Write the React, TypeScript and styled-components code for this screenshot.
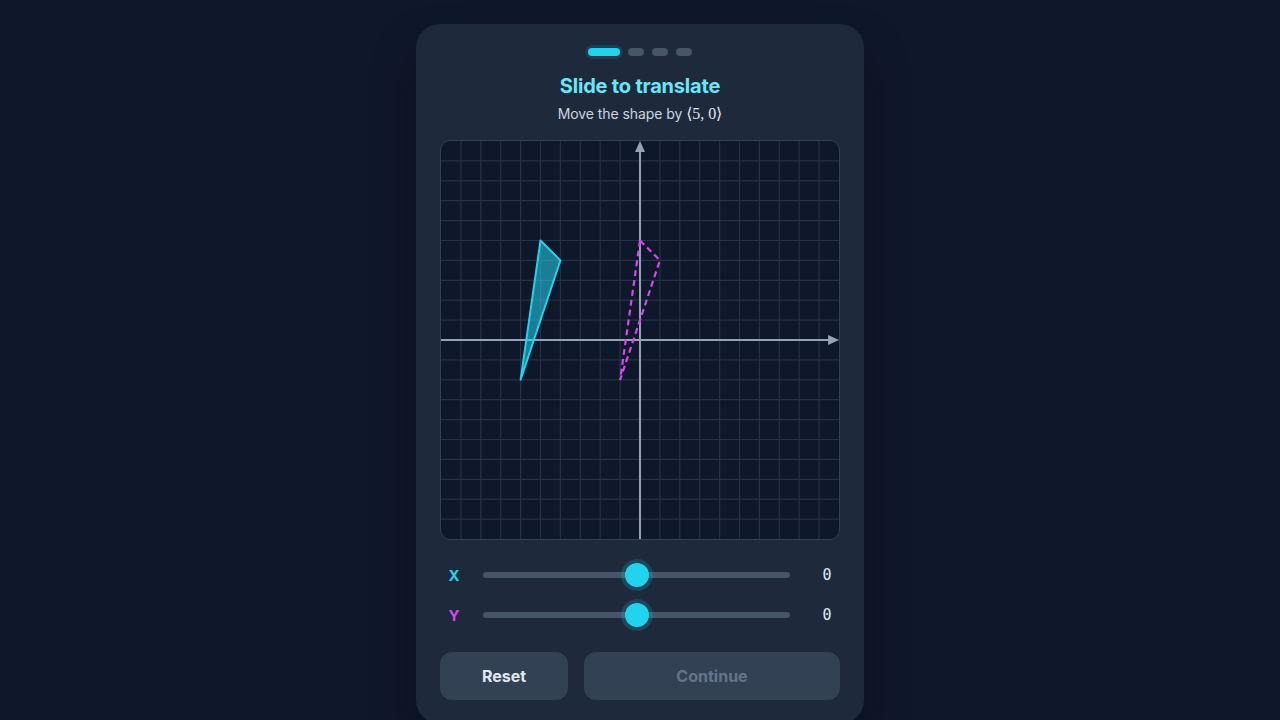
import React, { useState } from "react";
import styled, { createGlobalStyle } from "styled-components";

const GlobalStyle = createGlobalStyle`
  html, body {
    margin: 0;
    padding: 0;
    background: #0f172a;
    font-family: Inter, "Noto Sans", "DejaVu Sans", sans-serif;
    overflow: hidden;
  }
`;

const Page = styled.div`
  display: flex;
  justify-content: center;
  padding-top: 24px;
  min-height: 720px;
  box-sizing: border-box;
`;

const Card = styled.div`
  width: 448px;
  box-sizing: border-box;
  padding: 24px;
  background: #1e293b;
  border-radius: 24px;
  box-shadow: 0 25px 50px -12px rgba(0, 0, 0, 0.55);
  display: flex;
  flex-direction: column;
`;

const Steps = styled.div`
  display: flex;
  justify-content: center;
  gap: 8px;
`;

const Step = styled.div<{ $active?: boolean }>`
  width: ${({ $active }) => ($active ? "32px" : "16px")};
  height: 8px;
  border-radius: 4px;
  background: ${({ $active }) => ($active ? "#22d3ee" : "#475569")};
  box-shadow: ${({ $active }) =>
    $active ? "0 0 0 3px rgba(34, 211, 238, 0.12)" : "none"};
`;

const Title = styled.h2`
  margin: 16px 0 0;
  font-size: 20px;
  line-height: 28px;
  font-weight: 700;
  color: #67e8f9;
  text-align: center;
  letter-spacing: -0.01em;
`;

const Subtitle = styled.p`
  margin: 4px 0 0;
  font-size: 14px;
  line-height: 20px;
  color: #cbd5e1;
  text-align: center;
  letter-spacing: -0.005em;
`;

const MathText = styled.span`
  font-family: "Liberation Serif", "DejaVu Serif", serif;
  font-size: 16px;
  color: #e2e8f0;
`;

const Board = styled.div`
  margin-top: 16px;
  width: 400px;
  height: 400px;
  box-sizing: border-box;
  border: 1px solid #334155;
  border-radius: 10px;
  overflow: hidden;
  background: #0f172a;

  svg {
    display: block;
  }
`;

const Sliders = styled.div`
  margin-top: 20px;
  display: flex;
  flex-direction: column;
  gap: 10px;
`;

const SliderRow = styled.div`
  display: flex;
  align-items: center;
  height: 30px;
`;

const AxisLabel = styled.span<{ $color: string }>`
  width: 28px;
  margin-right: 15px;
  text-align: center;
  font-size: 15px;
  font-weight: 700;
  color: ${({ $color }) => $color};
`;

const Range = styled.input`
  flex: 1;
  margin: 0;
  height: 6px;
  border-radius: 3px;
  background: #475569;
  appearance: none;
  -webkit-appearance: none;
  outline: none;

  &::-webkit-slider-thumb {
    -webkit-appearance: none;
    width: 24px;
    height: 24px;
    border-radius: 50%;
    background: #22d3ee;
    border: none;
    box-shadow: 0 0 0 4px rgba(34, 211, 238, 0.18);
    cursor: pointer;
  }
`;

const Value = styled.span`
  width: 26px;
  margin-left: 24px;
  text-align: center;
  font-family: "DejaVu Sans Mono", "Liberation Mono", monospace;
  font-size: 15px;
  color: #e2e8f0;
`;

const Actions = styled.div`
  margin-top: 22px;
  display: flex;
  gap: 16px;
`;

const Button = styled.button<{ $grow?: boolean }>`
  height: 48px;
  width: ${({ $grow }) => ($grow ? "auto" : "128px")};
  flex: ${({ $grow }) => ($grow ? 1 : "none")};
  border: none;
  border-radius: 12px;
  background: #334155;
  color: #e2e8f0;
  font-family: inherit;
  font-size: 16px;
  font-weight: 700;
  cursor: pointer;

  &:disabled {
    color: #64748b;
    cursor: default;
  }
`;

const UNIT = 20;
const ORIGIN = 200;

const shape = [
  [-5, 5],
  [-4, 4],
  [-6, -2],
];
const target = [5, 0];

const toPoints = (pts: number[][], dx: number, dy: number) =>
  pts
    .map(([x, y]) => `${ORIGIN + (x + dx) * UNIT},${ORIGIN - (y + dy) * UNIT}`)
    .join(" ");

const Grid = ({ dx, dy }: { dx: number; dy: number }) => {
  const lines = [];
  for (let i = 1; i < 20; i++) {
    lines.push(
      <line key={`v${i}`} x1={i * UNIT} y1={0} x2={i * UNIT} y2={400} />,
      <line key={`h${i}`} x1={0} y1={i * UNIT} x2={400} y2={i * UNIT} />
    );
  }
  return (
    <svg width="398" height="398" viewBox="0 0 400 400">
      <g stroke="#263245" strokeWidth="1.2">{lines}</g>
      <g stroke="#94a3b8" strokeWidth="2">
        <line x1={0} y1={ORIGIN} x2={390} y2={ORIGIN} />
        <line x1={ORIGIN} y1={400} x2={ORIGIN} y2={10} />
      </g>
      <polygon points="400,200 389,195 389,205" fill="#94a3b8" />
      <polygon points="200,0 195,11 205,11" fill="#94a3b8" />
      <polygon
        points={toPoints(shape, target[0], target[1])}
        fill="none"
        stroke="#d946ef"
        strokeWidth="2.2"
        strokeDasharray="6 4"
      />
      <polygon
        points={toPoints(shape, dx, dy)}
        fill="rgba(34, 211, 238, 0.55)"
        stroke="#22d3ee"
        strokeWidth="2"
        strokeLinejoin="round"
      />
    </svg>
  );
};

const App = () => {
  const [dx, setDx] = useState(0);
  const [dy, setDy] = useState(0);

  return (
    <>
      <GlobalStyle />
      <Page>
        <Card>
          <Steps>
            <Step $active />
            <Step />
            <Step />
            <Step />
          </Steps>
          <Title>Slide to translate</Title>
          <Subtitle>
            Move the shape by <MathText>⟨5, 0⟩</MathText>
          </Subtitle>
          <Board>
            <Grid dx={dx} dy={dy} />
          </Board>
          <Sliders>
            <SliderRow>
              <AxisLabel $color="#22d3ee">X</AxisLabel>
              <Range
                type="range"
                min={-10}
                max={10}
                value={dx}
                onChange={(e) => setDx(Number(e.target.value))}
              />
              <Value>{dx}</Value>
            </SliderRow>
            <SliderRow>
              <AxisLabel $color="#d946ef">Y</AxisLabel>
              <Range
                type="range"
                min={-10}
                max={10}
                value={dy}
                onChange={(e) => setDy(Number(e.target.value))}
              />
              <Value>{dy}</Value>
            </SliderRow>
          </Sliders>
          <Actions>
            <Button
              onClick={() => {
                setDx(0);
                setDy(0);
              }}
            >
              Reset
            </Button>
            <Button $grow disabled={dx !== target[0] || dy !== target[1]}>
              Continue
            </Button>
          </Actions>
        </Card>
      </Page>
    </>
  );
};

export default App;
